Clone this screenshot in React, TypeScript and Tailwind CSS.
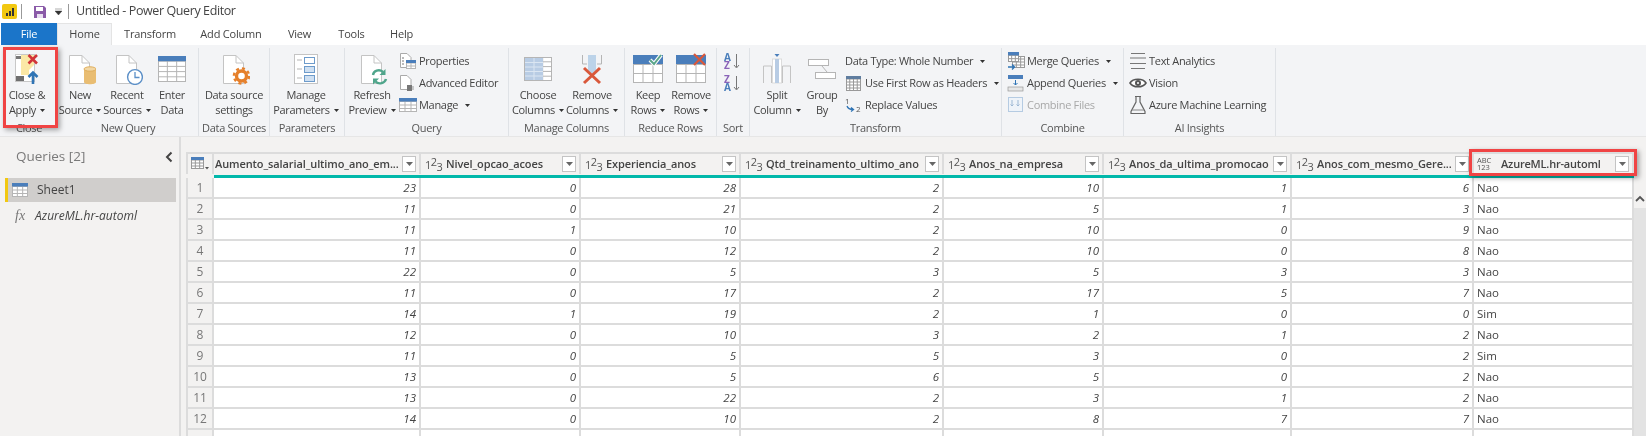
import { FC, ReactNode } from 'react';

const Caret: FC<{ className?: string }> = ({ className = 'ml-[5px]' }) => (
  <svg width="5" height="3" viewBox="0 0 5 3" className={`inline-block align-middle ${className}`}>
    <path d="M0 0H5L2.5 3Z" fill="#333" />
  </svg>
);

const Page: FC = () => (
  <>
    <path d="M5.5 2.5H18L25.5 10V30.5H5.5Z" fill="#fff" stroke="#c4c4c4" />
    <path d="M18 2.5V10H25.5" fill="none" stroke="#c4c4c4" />
  </>
);

const Big: FC<{ children: ReactNode; w?: number; h?: number }> = ({ children, w = 32, h = 32 }) => (
  <svg width={w} height={h} viewBox={`0 0 ${w} ${h}`}>
    {children}
  </svg>
);

const GridIcon: FC<{ x?: number; y?: number; w: number; h: number; cols: number; rows: number; color?: string; head?: string }> = ({
  x = 0,
  y = 0,
  w,
  h,
  cols,
  rows,
  color = '#b5b5b5',
  head,
}) => {
  const lines = [];
  for (let i = 1; i < cols; i++) {
    const px = x + (w / cols) * i;
    lines.push(<path key={`c${i}`} d={`M${px} ${y}V${y + h}`} stroke={color} />);
  }
  for (let i = 1; i < rows; i++) {
    const py = y + (h / rows) * i;
    lines.push(<path key={`r${i}`} d={`M${x} ${py}H${x + w}`} stroke={color} />);
  }
  return (
    <g>
      <rect x={x + 0.5} y={y + 0.5} width={w - 1} height={h - 1} fill="#fff" stroke={color} />
      {lines}
      {head && <rect x={x} y={y} width={w} height={h / rows} fill={head} />}
    </g>
  );
};

const CloseApplyIcon = () => (
  <Big w={26} h={32}>
    <rect x="1.5" y="1.5" width="19" height="27" fill="#fff" stroke="#c8c8c8" />
    <path d="M7 2H20V12L15 17V22H7Z" fill="#fbe8a6" />
    <rect x="2" y="3" width="5" height="3" fill="#777" />
    <rect x="2" y="23" width="8" height="5" fill="#6f6f6f" />
    <path d="M14.5 2L23 10.5M23 2L14.5 10.5" stroke="#d13438" strokeWidth="2.6" />
    <path d="M19 31V20M14.5 24L19 19.5L23.5 24" fill="none" stroke="#2f74b5" strokeWidth="2.6" />
  </Big>
);

const NewSourceIcon = () => (
  <Big>
    <Page />
    <path d="M20 16V29C20 32 32 32 32 29V16Z" fill="#e9bd72" />
    <ellipse cx="26" cy="16" rx="6" ry="2.2" fill="#f2d7a4" stroke="#e0ae5c" />
  </Big>
);

const RecentIcon = () => (
  <Big>
    <Page />
    <circle cx="24" cy="24" r="7.4" fill="#fff" stroke="#5b8fc7" strokeWidth="1.4" />
    <path d="M24 19V24.5H28.5" fill="none" stroke="#5b8fc7" strokeWidth="1.3" />
  </Big>
);

const EnterDataIcon = () => (
  <Big w={28}>
    <GridIcon y={3} w={28} h={26} cols={3} rows={5} head="#4a7ebb" />
  </Big>
);

const DataSourceIcon = () => (
  <Big>
    <Page />
    <circle cx="23.5" cy="23" r="5" fill="#fff" stroke="#e57f2a" strokeWidth="3.4" />
    <circle cx="23.5" cy="23" r="7.6" fill="none" stroke="#e57f2a" strokeWidth="2.4" strokeDasharray="3 3" />
  </Big>
);

const ParametersIcon = () => (
  <Big w={26}>
    <rect x="1.5" y="1.5" width="23" height="29" fill="#fff" stroke="#c4c4c4" />
    <path d="M4 7H9M4 16H9M4 25H9" stroke="#b5b5b5" />
    <rect x="11.5" y="4.5" width="10" height="6" fill="#fff" stroke="#6d9bcb" />
    <rect x="11.5" y="13.5" width="10" height="6" fill="#cfe0f2" stroke="#6d9bcb" />
    <rect x="11.5" y="22.5" width="10" height="6" fill="#cfe0f2" stroke="#6d9bcb" />
  </Big>
);

const RefreshIcon = () => (
  <Big>
    <Page />
    <path d="M17 22C17.5 18 23 15.5 27 19" fill="none" stroke="#4fa58b" strokeWidth="2.4" />
    <path d="M29.5 16V22H23.5Z" fill="#4fa58b" />
    <path d="M30 26C29 30 23 32 19.5 28.5" fill="none" stroke="#4fa58b" strokeWidth="2.4" />
    <path d="M17 31.5V25.5H23Z" fill="#4fa58b" />
  </Big>
);

const ChooseColumnsIcon = () => (
  <Big w={28}>
    <g transform="translate(0 4)">
      <GridIcon w={28} h={24} cols={3} rows={5} />
      <rect x="1" y="1" width="18" height="22" fill="#b8cce4" />
      <path d="M1 5.5H19M1 10H19M1 14.5H19M1 19H19M10 1V23" stroke="#dbe6f2" />
    </g>
  </Big>
);

const RemoveColumnsIcon = () => (
  <Big w={24}>
    <path d="M2.5 2V11H7M21.5 2V11H17" fill="none" stroke="#b5b5b5" />
    <path d="M8 2H16V17L12 21L8 17Z" fill="#bcd3e9" />
    <path d="M4 15L20 30M20 15L4 30" stroke="#d9583b" strokeWidth="3" />
  </Big>
);

const KeepRowsIcon = () => (
  <Big w={30}>
    <GridIcon y={11} w={30} h={19} cols={3} rows={2} />
    <rect y="2" width="30" height="9" fill="#4a7ebb" />
    <path d="M17 7L21 11L28 2" fill="none" stroke="#fff" strokeWidth="4" />
    <path d="M17 7L21 11L28 2" fill="none" stroke="#5ba68a" strokeWidth="2" />
  </Big>
);

const RemoveRowsIcon = () => (
  <Big w={30}>
    <GridIcon y={11} w={30} h={19} cols={3} rows={2} />
    <rect y="2" width="30" height="9" fill="#4a7ebb" />
    <path d="M18 1L29 12M29 1L18 12" stroke="#d9583b" strokeWidth="2.2" />
  </Big>
);

const SplitIcon = () => (
  <Big w={30}>
    <path d="M1.5 30V13H9.5M20.5 13H28.5V30" fill="none" stroke="#c4c4c4" />
    <path d="M9.5 30V13M20.5 13V30" stroke="#c4c4c4" />
    <rect x="10.5" y="6" width="9" height="24" fill="#fff" stroke="#dcdcdc" />
    <rect x="13" y="6" width="4" height="24" fill="#b8cce4" />
    <path d="M12.5 1H17.5L15 4Z" fill="#4a7ebb" />
  </Big>
);

const GroupIcon = () => (
  <Big w={30}>
    <rect x="1.5" y="6.5" width="20" height="6" fill="#fff" stroke="#b5b5b5" />
    <rect x="8.5" y="19.5" width="20" height="6" fill="#fff" stroke="#b5b5b5" />
    <path d="M15 13L20 19" stroke="#b5b5b5" />
  </Big>
);

const SmallPageIcon: FC<{ children?: ReactNode }> = ({ children }) => (
  <svg width="18" height="18" viewBox="0 0 18 18">
    <path d="M1.5 1.5H8L12 5.5V15.5H1.5Z" fill="#fff" stroke="#aaa" />
    {children}
  </svg>
);

const TableSmallIcon = () => (
  <svg width="18" height="18" viewBox="0 0 18 18">
    <GridIcon y={2} w={18} h={14} cols={3} rows={4} head="#4a7ebb" />
  </svg>
);

const PropertiesIcon = () => (
  <SmallPageIcon>
    <path d="M3 6H5M3 9H5M3 12H5" stroke="#777" />
    <GridIcon x={7} y={8} w={10} h={9} cols={2} rows={3} head="#4a7ebb" />
  </SmallPageIcon>
);

const AdvancedIcon = () => (
  <SmallPageIcon>
    <rect x="8" y="11" width="5" height="6" fill="#777" />
    <path d="M14 12V16" stroke="#999" />
  </SmallPageIcon>
);

const HeadersIcon = () => (
  <svg width="16" height="18" viewBox="0 0 16 18">
    <GridIcon y={2} w={15} h={15} cols={4} rows={5} color="#999" head="#5f7d9f" />
  </svg>
);

const ReplaceIcon = () => (
  <svg width="18" height="18" viewBox="0 0 18 18">
    <text x="0" y="8" fontSize="8" fill="#555" fontFamily="Open Sans">1</text>
    <path d="M2 10C3 13 5 13.5 8 13.5M6 11.5L8.5 13.5L6 15.5" fill="none" stroke="#2f74b5" strokeWidth="1.3" />
    <text x="11" y="16" fontSize="8" fill="#555" fontFamily="Open Sans">2</text>
  </svg>
);

const MergeIcon = () => (
  <svg width="18" height="18" viewBox="0 0 18 18">
    <GridIcon x={5} y={4} w={13} h={12} cols={3} rows={4} color="#999" />
    <GridIcon x={1} y={0} w={11} h={10} cols={3} rows={3} color="#999" head="#4a7ebb" />
    <path d="M1 15H7M5 12.5L7.5 15L5 17.5" fill="none" stroke="#2f74b5" strokeWidth="1.3" />
  </svg>
);

const AppendIcon = () => (
  <svg width="18" height="18" viewBox="0 0 18 18">
    <rect x="1" y="1" width="15" height="4" fill="#4a7ebb" />
    <path d="M8.5 6V11M6.5 9L8.5 11L10.5 9" fill="none" stroke="#2f74b5" />
    <rect x="1" y="13" width="15" height="4" fill="#e6e6e6" stroke="#999" strokeWidth="0.7" />
  </svg>
);

const CombineFilesIcon = () => (
  <svg width="18" height="18" viewBox="0 0 18 18">
    <rect x="1.5" y="1.5" width="14" height="14" fill="#eef3f9" stroke="#b5cbe2" />
    <path d="M5 4V10M3.5 8.5L5 10L6.5 8.5M11 4V10M9.5 8.5L11 10L12.5 8.5" fill="none" stroke="#9db8d4" />
  </svg>
);

const TextAnalyticsIcon = () => (
  <svg width="18" height="18" viewBox="0 0 18 18">
    <path d="M2 1.5H16M1 6H17M1 11.5H17M2 16.5H16" stroke="#777" strokeWidth="1.1" />
  </svg>
);

const EyeIcon = () => (
  <svg width="18" height="14" viewBox="0 0 18 14">
    <path d="M1 7C4 2 14 2 17 7C14 12 4 12 1 7Z" fill="#fff" stroke="#555" strokeWidth="1.6" />
    <circle cx="9" cy="7" r="3" fill="#555" />
    <circle cx="9" cy="7" r="1" fill="#fff" />
  </svg>
);

const FlaskIcon = () => (
  <svg width="18" height="20" viewBox="0 0 18 20">
    <path d="M6 1.5H12M7 1.5V7L2 16.5V18.5H16V16.5L11 7V1.5" fill="none" stroke="#666" strokeWidth="1.2" />
    <path d="M3 15H15" stroke="#888" />
  </svg>
);

const SortIcon = () => (
  <svg width="20" height="38" viewBox="0 0 20 38" className="overflow-visible">
    <text x="1" y="8" fontSize="10" fontWeight="700" fill="#4a7ebb" fontFamily="Open Sans">A</text>
    <text x="1" y="16" fontSize="10" fontWeight="700" fill="#8a63b8" fontFamily="Open Sans">Z</text>
    <path d="M13.5 1V14M11 12L13.5 15L16 12" fill="none" stroke="#777" />
    <text x="1" y="30" fontSize="10" fontWeight="700" fill="#8a63b8" fontFamily="Open Sans">Z</text>
    <text x="1" y="38" fontSize="10" fontWeight="700" fill="#4a7ebb" fontFamily="Open Sans">A</text>
    <path d="M13.5 23V36M11 34L13.5 37L16 34" fill="none" stroke="#777" />
  </svg>
);

const BigButton: FC<{ icon: ReactNode; top: string; bottom: string; caret?: boolean; w: string }> = ({ icon, top, bottom, caret, w }) => (
  <div className={`flex shrink-0 flex-col items-center pt-[5px] ${w}`}>
    <div className="flex h-[32px] items-center justify-center">{icon}</div>
    <div className="mt-[3px] whitespace-nowrap text-center leading-[14.5px]">
      <div>{top}</div>
      <div>
        {bottom}
        {caret && <Caret className="ml-[4px]" />}
      </div>
    </div>
  </div>
);

const SmallAction: FC<{ icon?: ReactNode; label: string; caret?: boolean; disabled?: boolean }> = ({ icon, label, caret, disabled }) => (
  <div className={`flex h-[22px] items-center gap-[2px] whitespace-nowrap ${disabled ? 'text-[#a8a8a8]' : ''}`}>
    {icon && <span className="flex w-[18px] items-center justify-center">{icon}</span>}
    <span>{label}</span>
    {caret && <Caret />}
  </div>
);

const RibbonGroup: FC<{ label: string; w: string; border?: boolean; children: ReactNode }> = ({ label, w, border = true, children }) => (
  <div className={`flex h-[88px] shrink-0 flex-col ${w} ${border ? 'border-r border-[#dfe2e6]' : ''}`}>
    <div className="flex h-[70px]">{children}</div>
    <div className="h-[18px] whitespace-nowrap pt-px text-center leading-[18px] text-[#555]">{label}</div>
  </div>
);

const SmallColumn: FC<{ className?: string; children: ReactNode }> = ({ className = '', children }) => (
  <div className={`flex flex-col pt-[2px] ${className}`}>{children}</div>
);

const Ribbon = () => (
  <div className="flex h-[92px] border-b border-[#e6e6e6] bg-[#f3f4f6] pt-[3px] text-[11px] tracking-[-0.3px] text-[#444]">
    <RibbonGroup label="Close" w="w-[58px]" border={false}>
      <BigButton w="w-[54px]" icon={<CloseApplyIcon />} top="Close &" bottom="Apply" caret />
    </RibbonGroup>
    <RibbonGroup label="New Query" w="w-[141px]">
      <BigButton w="w-[44px]" icon={<NewSourceIcon />} top="New" bottom="Source" caret />
      <BigButton w="w-[50px]" icon={<RecentIcon />} top="Recent" bottom="Sources" caret />
      <BigButton w="w-[40px]" icon={<EnterDataIcon />} top="Enter" bottom="Data" />
    </RibbonGroup>
    <RibbonGroup label="Data Sources" w="w-[71px]">
      <BigButton w="w-[70px]" icon={<DataSourceIcon />} top="Data source" bottom="settings" />
    </RibbonGroup>
    <RibbonGroup label="Parameters" w="w-[75px]">
      <BigButton w="w-[72px]" icon={<ParametersIcon />} top="Manage" bottom="Parameters" caret />
    </RibbonGroup>
    <RibbonGroup label="Query" w="w-[164px]">
      <BigButton w="w-[54px]" icon={<RefreshIcon />} top="Refresh" bottom="Preview" caret />
      <SmallColumn>
        <SmallAction icon={<PropertiesIcon />} label="Properties" />
        <SmallAction icon={<AdvancedIcon />} label="Advanced Editor" />
        <SmallAction icon={<TableSmallIcon />} label="Manage" caret />
      </SmallColumn>
    </RibbonGroup>
    <RibbonGroup label="Manage Columns" w="w-[116px]">
      <BigButton w="w-[58px]" icon={<ChooseColumnsIcon />} top="Choose" bottom="Columns" caret />
      <BigButton w="w-[50px]" icon={<RemoveColumnsIcon />} top="Remove" bottom="Columns" caret />
    </RibbonGroup>
    <RibbonGroup label="Reduce Rows" w="w-[92px]">
      <BigButton w="w-[46px]" icon={<KeepRowsIcon />} top="Keep" bottom="Rows" caret />
      <BigButton w="w-[40px]" icon={<RemoveRowsIcon />} top="Remove" bottom="Rows" caret />
    </RibbonGroup>
    <RibbonGroup label="Sort" w="w-[33px]">
      <div className="flex w-full justify-center pt-[5px]">
        <SortIcon />
      </div>
    </RibbonGroup>
    <RibbonGroup label="Transform" w="w-[252px]">
      <BigButton w="w-[54px]" icon={<SplitIcon />} top="Split" bottom="Column" caret />
      <BigButton w="w-[36px]" icon={<GroupIcon />} top="Group" bottom="By" />
      <SmallColumn className="pl-[5px]">
        <SmallAction label="Data Type: Whole Number" caret />
        <SmallAction icon={<HeadersIcon />} label="Use First Row as Headers" caret />
        <SmallAction icon={<ReplaceIcon />} label="Replace Values" />
      </SmallColumn>
    </RibbonGroup>
    <RibbonGroup label="Combine" w="w-[122px]">
      <SmallColumn className="pl-[5px]">
        <SmallAction icon={<MergeIcon />} label="Merge Queries" caret />
        <SmallAction icon={<AppendIcon />} label="Append Queries" caret />
        <SmallAction icon={<CombineFilesIcon />} label="Combine Files" disabled />
      </SmallColumn>
    </RibbonGroup>
    <RibbonGroup label="AI Insights" w="w-[152px]">
      <SmallColumn className="pl-[5px]">
        <SmallAction icon={<TextAnalyticsIcon />} label="Text Analytics" />
        <SmallAction icon={<EyeIcon />} label="Vision" />
        <SmallAction icon={<FlaskIcon />} label="Azure Machine Learning" />
      </SmallColumn>
    </RibbonGroup>
  </div>
);

const TitleBar = () => (
  <div className="flex h-[23px] items-center bg-white pl-[2px] text-[12.5px] tracking-[-0.4px] text-[#444]">
    <div className="flex h-[15px] w-[15px] items-end justify-center gap-[1px] rounded-[2px] bg-[#f2c811] pb-[3px]">
      <span className="h-[3px] w-[2px] bg-[#333]" />
      <span className="h-[5px] w-[2px] bg-[#333]" />
      <span className="h-[8px] w-[2px] bg-[#333]" />
    </div>
    <span className="ml-[4px] h-[15px] w-px bg-[#999]" />
    <svg width="14" height="14" viewBox="0 0 14 14" className="ml-[11px]">
      <path d="M1 1H11L13 3V13H1Z" fill="#8a5aa8" />
      <rect x="3" y="2" width="7" height="4" fill="#fff" />
      <rect x="4" y="9" width="6" height="4" fill="#e9dff0" />
    </svg>
    <svg width="7" height="7" viewBox="0 0 7 7" className="ml-[8px]">
      <path d="M0 1H7M0 3H7L3.5 7Z" fill="#333" stroke="#333" strokeWidth="0.4" />
    </svg>
    <span className="ml-[6px] h-[15px] w-px bg-[#999]" />
    <span className="ml-[7px] whitespace-nowrap">Untitled - Power Query Editor</span>
  </div>
);

const tabs = [
  { label: 'Transform', w: 'w-[76px]' },
  { label: 'Add Column', w: 'w-[86px]' },
  { label: 'View', w: 'w-[51px]' },
  { label: 'Tools', w: 'w-[53px]' },
  { label: 'Help', w: 'w-[47px]' },
];

const TabBar = () => (
  <div className="flex h-[22px] items-stretch bg-white pl-px text-[11px] tracking-[-0.2px] text-[#444]">
    <div className="flex w-[56px] items-center justify-center bg-[#1b75c9] text-white">File</div>
    <div className="flex w-[55px] items-center justify-center border-x border-t border-[#e4e4e4] bg-[#f3f4f6]">Home</div>
    {tabs.map((tab) => (
      <div key={tab.label} className={`flex items-center justify-center ${tab.w}`}>
        {tab.label}
      </div>
    ))}
  </div>
);

const QueriesPane = () => (
  <div className="flex w-[181px] shrink-0 flex-col border-r-2 border-[#dcdcdc] pl-[5px] pr-[3px] text-[12px] text-[#444]">
    <div className="flex h-[41px] items-center justify-between pb-[2px] pl-[11px] pr-[3px] text-[13.5px] text-[#7a7a7a]">
      <span>Queries [2]</span>
      <svg width="8" height="12" viewBox="0 0 8 12">
        <path d="M6.5 1.5L2 6L6.5 10.5" fill="none" stroke="#444" strokeWidth="2" />
      </svg>
    </div>
    <div className="flex h-[24px] items-center border-l-[3px] border-[#f2c811] bg-[#d0cecc] pl-[4px]">
      <svg width="16" height="14" viewBox="0 0 16 14" className="mr-[9px]">
        <GridIcon w={16} h={14} cols={3} rows={4} head="#4a7ebb" />
      </svg>
      Sheet1
    </div>
    <div className="flex h-[27px] items-center pl-[10px] italic">
      <span className="mr-[10px] font-['Liberation_Serif',serif] text-[14px] text-[#777]">fx</span>
      AzureML.hr-automl
    </div>
  </div>
);

const NumericType = () => (
  <span className="mr-[4px] ml-[3px] flex w-[17px] shrink-0 whitespace-nowrap text-[11px] font-normal leading-none tracking-[-0.5px] text-[#555]">
    1<span className="relative top-[-3px]">2</span>
    <span className="relative top-[2px]">3</span>
  </span>
);

const FilterButton = () => (
  <span className="ml-auto mr-[3px] flex h-[16px] w-[14px] shrink-0 items-center justify-center border border-[#c4c4c4] bg-white">
    <svg width="7" height="4" viewBox="0 0 7 4">
      <path d="M0 0H7L3.5 4Z" fill="#666" />
    </svg>
  </span>
);

const columns = [
  { name: 'Aumento_salarial_ultimo_ano_em...', numeric: false },
  { name: 'Nivel_opcao_acoes', numeric: true },
  { name: 'Experiencia_anos', numeric: true },
  { name: 'Qtd_treinamento_ultimo_ano', numeric: true },
  { name: 'Anos_na_empresa', numeric: true },
  { name: 'Anos_da_ultima_promocao', numeric: true },
  { name: 'Anos_com_mesmo_Gere...', numeric: true },
];

const rows: [number, number, number, number, number, number, number, string][] = [
  [23, 0, 28, 2, 10, 1, 6, 'Nao'],
  [11, 0, 21, 2, 5, 1, 3, 'Nao'],
  [11, 1, 10, 2, 10, 0, 9, 'Nao'],
  [11, 0, 12, 2, 10, 0, 8, 'Nao'],
  [22, 0, 5, 3, 5, 3, 3, 'Nao'],
  [11, 0, 17, 2, 17, 5, 7, 'Nao'],
  [14, 1, 19, 2, 1, 0, 0, 'Sim'],
  [12, 0, 10, 3, 2, 1, 2, 'Nao'],
  [11, 0, 5, 5, 3, 0, 2, 'Sim'],
  [13, 0, 5, 6, 5, 0, 2, 'Nao'],
  [13, 0, 22, 2, 3, 1, 2, 'Nao'],
  [14, 0, 10, 2, 8, 7, 7, 'Nao'],
];

const gridCols = 'grid grid-cols-[28px_207px_160px_160px_203px_160px_188px_182px_160px]';

const DataTable = () => (
  <div className="w-[1448px] shrink-0">
    <div className={`${gridCols} h-[26px] text-[11px] font-semibold tracking-[-0.1px] text-[#444]`}>
      <div className="flex h-[22px] items-center justify-center border-x-2 border-t-2 border-[#dcdcdc] bg-[#f3f2f1]">
        <svg width="18" height="14" viewBox="0 0 18 14">
          <GridIcon w={13} h={12} cols={3} rows={4} color="#999" head="#4a7ebb" />
          <path d="M14 10H18L16 12.5Z" fill="#555" />
        </svg>
      </div>
      {columns.map((col) => (
        <div key={col.name} className="border-t-2 border-[#dcdcdc]">
          <div className="flex h-[20px] items-center gap-0 border-r-2 border-[#dcdcdc] bg-[#f3f2f1] pl-px">
            {col.numeric && <NumericType />}
            <span className="min-w-0 overflow-hidden whitespace-nowrap">{col.name}</span>
            <FilterButton />
          </div>
          <div className="mt-px h-[4px] bg-[#01b8aa]" />
        </div>
      ))}
      <div className="border-t-2 border-[#dcdcdc]">
        <div className="flex h-[20px] items-center border-r-2 border-[#dcdcdc] bg-[#f3f2f1] pl-[3px]">
          <span className="mr-[8px] flex w-[16px] flex-col text-[7.5px] font-normal leading-[7.5px] text-[#555]">
            <span>ABC</span>
            <span>123</span>
          </span>
          <span className="whitespace-nowrap tracking-[-0.2px]">AzureML.hr-automl</span>
          <FilterButton />
        </div>
        <div className="mt-px h-[4px] bg-[#01b8aa]" />
      </div>
    </div>
    {rows.map((row, i) => (
      <div key={i} className={`${gridCols} h-[21px] text-[11.5px] text-[#444]`}>
        <div className="flex items-center justify-center border-x-2 border-b-2 border-[#dcdcdc] bg-[#f3f2f1] text-[12px] text-[#777]">
          {i + 1}
        </div>
        {row.map((value, j) =>
          typeof value === 'number' ? (
            <div key={j} className="flex items-center justify-end border-r-2 border-b-2 border-[#dcdcdc] bg-white pr-[3px] italic">
              {value}
            </div>
          ) : (
            <div key={j} className="flex items-center border-r-2 border-b-2 border-[#dcdcdc] bg-white pl-[3px]">
              {value}
            </div>
          ),
        )}
      </div>
    ))}
    <div className={`${gridCols} h-[10px]`}>
      <div className="border-x-2 border-[#dcdcdc] bg-[#f3f2f1]" />
      {columns.map((col) => (
        <div key={col.name} className="border-r-2 border-[#dcdcdc] bg-white" />
      ))}
      <div className="border-r-2 border-[#dcdcdc] bg-white" />
    </div>
  </div>
);

const Scrollbar = () => (
  <div className="flex w-[12px] shrink-0 flex-col items-center pt-[43px]">
    <svg width="10" height="7" viewBox="0 0 10 7">
      <path d="M1 6L5 2L9 6" fill="none" stroke="#555" strokeWidth="1.8" />
    </svg>
    <div className="mt-[6px] w-full flex-1 bg-[#e3e3e3]" />
  </div>
);

export default function App() {
  return (
    <div className="relative h-[436px] w-[1646px] overflow-hidden bg-[#f3f2f1] font-['Open_Sans',sans-serif] blur-[0.35px]">
      <TitleBar />
      <TabBar />
      <Ribbon />
      <div className="flex h-[299px]">
        <QueriesPane />
        <div className="flex min-w-0 flex-1 pl-[5px] pt-[15px]">
          <DataTable />
          <Scrollbar />
        </div>
      </div>
      {/* annotation boxes */}
      <div className="absolute left-[3px] top-[47px] h-[81px] w-[55px] border-[3px] border-[#f04444] shadow-[2px_2px_5px_rgba(0,0,0,0.35)]" />
      <div className="absolute left-[1469px] top-[149px] h-[27px] w-[168px] border-[3px] border-[#f04444] shadow-[2px_2px_5px_rgba(0,0,0,0.35)]" />
    </div>
  );
}
